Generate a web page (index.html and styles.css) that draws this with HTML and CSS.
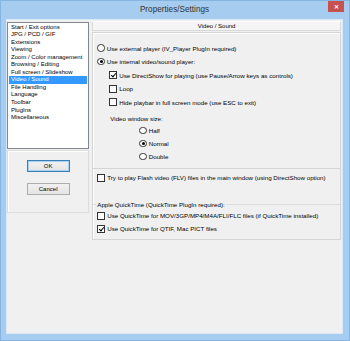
FILE: index.html
```html
<!DOCTYPE html>
<html lang="en">

<head>
    <meta charset="UTF-8">
    <title>Properties/Settings</title>
    <link rel="stylesheet" href="styles.css">
</head>

<body>
    <div class="window">
        <div class="titlebar">
            <span></span>
            <span class="title">Properties/Settings</span>
            <span class="close">&#x2715;</span>
        </div>
        <div class="client">
            <div class="side">
                <ul class="pages">
                    <li>Start / Exit options</li>
                    <li>JPG / PCD / GIF</li>
                    <li>Extensions</li>
                    <li>Viewing</li>
                    <li>Zoom / Color management</li>
                    <li>Browsing / Editing</li>
                    <li>Full screen / Slideshow</li>
                    <li class="selected">Video / Sound</li>
                    <li>File Handling</li>
                    <li>Language</li>
                    <li>Toolbar</li>
                    <li>PlugIns</li>
                    <li>Miscellaneous</li>
                </ul>
                <div class="actions">
                    <button class="default">OK</button>
                    <button>Cancel</button>
                </div>
            </div>

            <div class="main">
                <div class="page-title">Video / Sound</div>
                <div class="panel">
                    <div class="section player">
                        <div class="opt"><span class="radio"></span>Use external player (IV_Player PlugIn required)</div>
                        <div class="opt"><span class="radio on"></span>Use internal video/sound player:</div>
                        <div class="opt sub"><span class="check on"></span>Use DirectShow for playing (use Pause/Arrow keys as controls)</div>
                        <div class="opt sub"><span class="check"></span>Loop</div>
                        <div class="opt sub"><span class="check"></span>Hide playbar in full screen mode (use ESC to exit)</div>
                        <div class="size-label">Video window size:</div>
                        <div class="opt size"><span class="radio"></span>Half</div>
                        <div class="opt size"><span class="radio on"></span>Normal</div>
                        <div class="opt size"><span class="radio"></span>Double</div>
                    </div>
                    <div class="opt flash"><span class="check"></span>Try to play Flash video (FLV) files in the main window (using DirectShow option)</div>
                    <div class="group-caption">Apple QuickTime (QuickTime PlugIn required):</div>
                    <div class="section quicktime">
                        <div class="opt"><span class="check"></span>Use QuickTime for MOV/3GP/MP4/M4A/FLI/FLC files (if QuickTime installed)</div>
                        <div class="opt"><span class="check on"></span>Use QuickTime for QTIF, Mac PICT files</div>
                    </div>
                </div>
            </div>
        </div>
    </div>
</body>

</html>
```

FILE: styles.css
```css
body {
    margin: 0;
    font-family: 'Liberation Sans', Arial, sans-serif;
    font-size: 6px;
    color: #000;
}

.window {
    width: 350px;
    height: 341px;
    box-sizing: border-box;
    padding: 0 6px 6px 5px;
    background: #a6cdef;
    border: 1px solid #86b4e0;
    display: flex;
    flex-direction: column;
}

.titlebar {
    height: 18px;
    display: grid;
    grid-template-columns: 1fr auto 1fr;
    align-items: start;
}

.title {
    font-size: 8.2px;
    color: #333;
    margin-top: 4px;
}

.close {
    justify-self: end;
    width: 16px;
    height: 11px;
    margin-right: -1px;
    background: #c75050;
    color: #fff;
    font-size: 6px;
    font-weight: bold;
    display: flex;
    justify-content: center;
    align-items: center;
}

.client {
    flex: 1;
    background: #f0f0f0;
    border: 1px solid #dbe8f5;
    padding: 1px 1px 0 0;
    display: flex;
    gap: 3px;
}

.side {
    width: 83px;
    display: flex;
    flex-direction: column;
}

.pages {
    list-style: none;
    margin: 1px 0 0;
    padding: 0.5px 1px;
    height: 127px;
    box-sizing: border-box;
    background: #fff;
    border: 1px solid #828790;
}

.pages li {
    height: 7.56px;
    line-height: 7.56px;
    padding-left: 2px;
    white-space: nowrap;
}

.pages li.selected {
    background: #3399ff;
    color: #fff;
}

.actions {
    margin-top: 1px;
    height: 63px;
    box-sizing: border-box;
    border: 1px solid #dcdcdc;
    box-shadow: inset 1px 1px 0 #fff;
    padding-top: 9px;
    display: flex;
    flex-direction: column;
    align-items: center;
    gap: 11px;
}

button {
    width: 43px;
    height: 12px;
    padding: 0;
    font-family: inherit;
    font-size: 6px;
    color: #000;
    background: linear-gradient(to bottom, #f0f0f0, #e5e5e5);
    border: 1px solid #acacac;
}

button.default {
    border-color: #3c7fb1;
    box-shadow: inset 0 0 0 1px #a6d1f7;
}

.main {
    width: 251px;
    display: flex;
    flex-direction: column;
}

.page-title {
    height: 10px;
    box-sizing: border-box;
    line-height: 9px;
    text-align: center;
    background: #f5f5f5;
    border: 1px solid #d9d9d9;
    border-top-color: #fff;
}

.panel {
    margin-top: 1px;
    height: 208px;
    box-sizing: border-box;
    border: 1px solid #d5d5d5;
    box-shadow: inset 1px 1px 0 #fff;
    font-size: 6.2px;
}

.opt {
    display: flex;
    align-items: center;
    gap: 2px;
    height: 13.5px;
    white-space: nowrap;
}

.player {
    padding: 8.25px 0 4.5px 4px;
    border-bottom: 1px solid #d5d5d5;
}

.player .sub {
    padding-left: 12px;
}

.size-label {
    height: 10px;
    line-height: 10px;
    margin-top: 5.25px;
    padding-left: 13px;
}

.player .size {
    height: 13px;
    padding-left: 42px;
}

.flash {
    height: 13px;
    margin-top: 2.5px;
    padding-left: 4px;
}

.group-caption {
    margin-top: 15px;
    height: 10px;
    display: flex;
    align-items: center;
    gap: 1px;
    white-space: nowrap;
}

.group-caption::before,
.group-caption::after {
    content: "";
    border-top: 1px solid #dcdcdc;
}

.group-caption::before {
    width: 3px;
}

.group-caption::after {
    flex: 1;
}

.quicktime {
    padding-left: 4px;
}

.quicktime .opt {
    height: 13px;
}

.check,
.radio {
    flex: none;
    width: 8px;
    height: 8px;
    box-sizing: border-box;
    background: #fff;
    border: 1px solid #333;
    position: relative;
}

.radio {
    width: 7.5px;
    height: 7.5px;
    border-radius: 50%;
}

.radio.on::after {
    content: "";
    position: absolute;
    left: 1.25px;
    top: 1.25px;
    width: 3px;
    height: 3px;
    border-radius: 50%;
    background: #000;
}

.check.on::after {
    content: "";
    position: absolute;
    left: 2px;
    top: 0;
    width: 2px;
    height: 4px;
    border: solid #000;
    border-width: 0 1.2px 1.2px 0;
    transform: rotate(40deg);
}
```
